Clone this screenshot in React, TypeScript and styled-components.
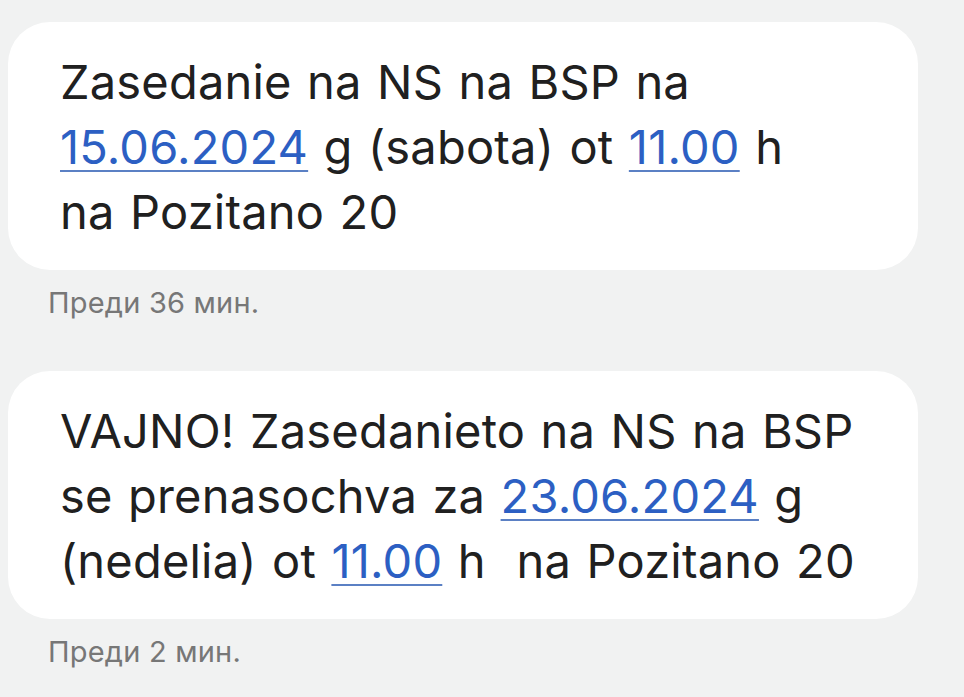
import React from 'react';
import styled, { createGlobalStyle } from 'styled-components';

const GlobalStyle = createGlobalStyle`
	html, body {
		margin: 0;
		padding: 0;
		background: #f1f2f2;
	}
	body {
		font-family: Inter, "Noto Sans", sans-serif;
		-webkit-font-smoothing: antialiased;
	}
`;

interface Message {
	lines: React.ReactNode[];
	time: string;
}

function Link({ children }: { children: React.ReactNode }) {
	return <LinkText>{children}</LinkText>;
}

const messages: Message[] = [
	{
		lines: [
			<>Zasedanie na NS na BSP na</>,
			<><Link>15.06.2024</Link> g (sabota) ot <Link>11.00</Link> h</>,
			<>na Pozitano 20</>,
		],
		time: 'Преди 36 мин.',
	},
	{
		lines: [
			<>VAJNO! Zasedanieto na NS na BSP</>,
			<>se prenasochva za <Link>23.06.2024</Link> g</>,
			<>(nedelia) ot <Link>11.00</Link> h&nbsp; na Pozitano 20</>,
		],
		time: 'Преди 2 мин.',
	},
];

const App = () => {
	return (
		<>
			<GlobalStyle />
			<Thread>
				{messages.map((msg, i) => (
					<Entry key={i}>
						<Bubble>
							{msg.lines.map((line, j) => (
								<Line key={j}>{line}</Line>
							))}
						</Bubble>
						<Time>{msg.time}</Time>
					</Entry>
				))}
			</Thread>
		</>
	);
};

const Thread = styled.div`
	display: flex;
	flex-direction: column;
	gap: 50px;
	padding: 22px 46px 0 8px;
`;

const Entry = styled.div`
	display: flex;
	flex-direction: column;
`;

const Bubble = styled.div`
	background: #ffffff;
	border-radius: 42px;
	padding: 27px 40px 26px 52px;
	color: #202020;
	font-size: 47px;
	line-height: 65px;
	letter-spacing: 0.2px;
	word-spacing: 2px;
`;

const Line = styled.div`
	white-space: nowrap;
`;

const LinkText = styled.span`
	color: #2c5fc3;
	text-decoration: underline;
	text-decoration-color: #5b80c4;
	text-decoration-thickness: 2px;
	text-underline-offset: 6px;
`;

const Time = styled.div`
	margin: 15px 0 0 40px;
	font-size: 29px;
	line-height: 36px;
	letter-spacing: 0.2px;
	color: #777777;
`;

export default App;
